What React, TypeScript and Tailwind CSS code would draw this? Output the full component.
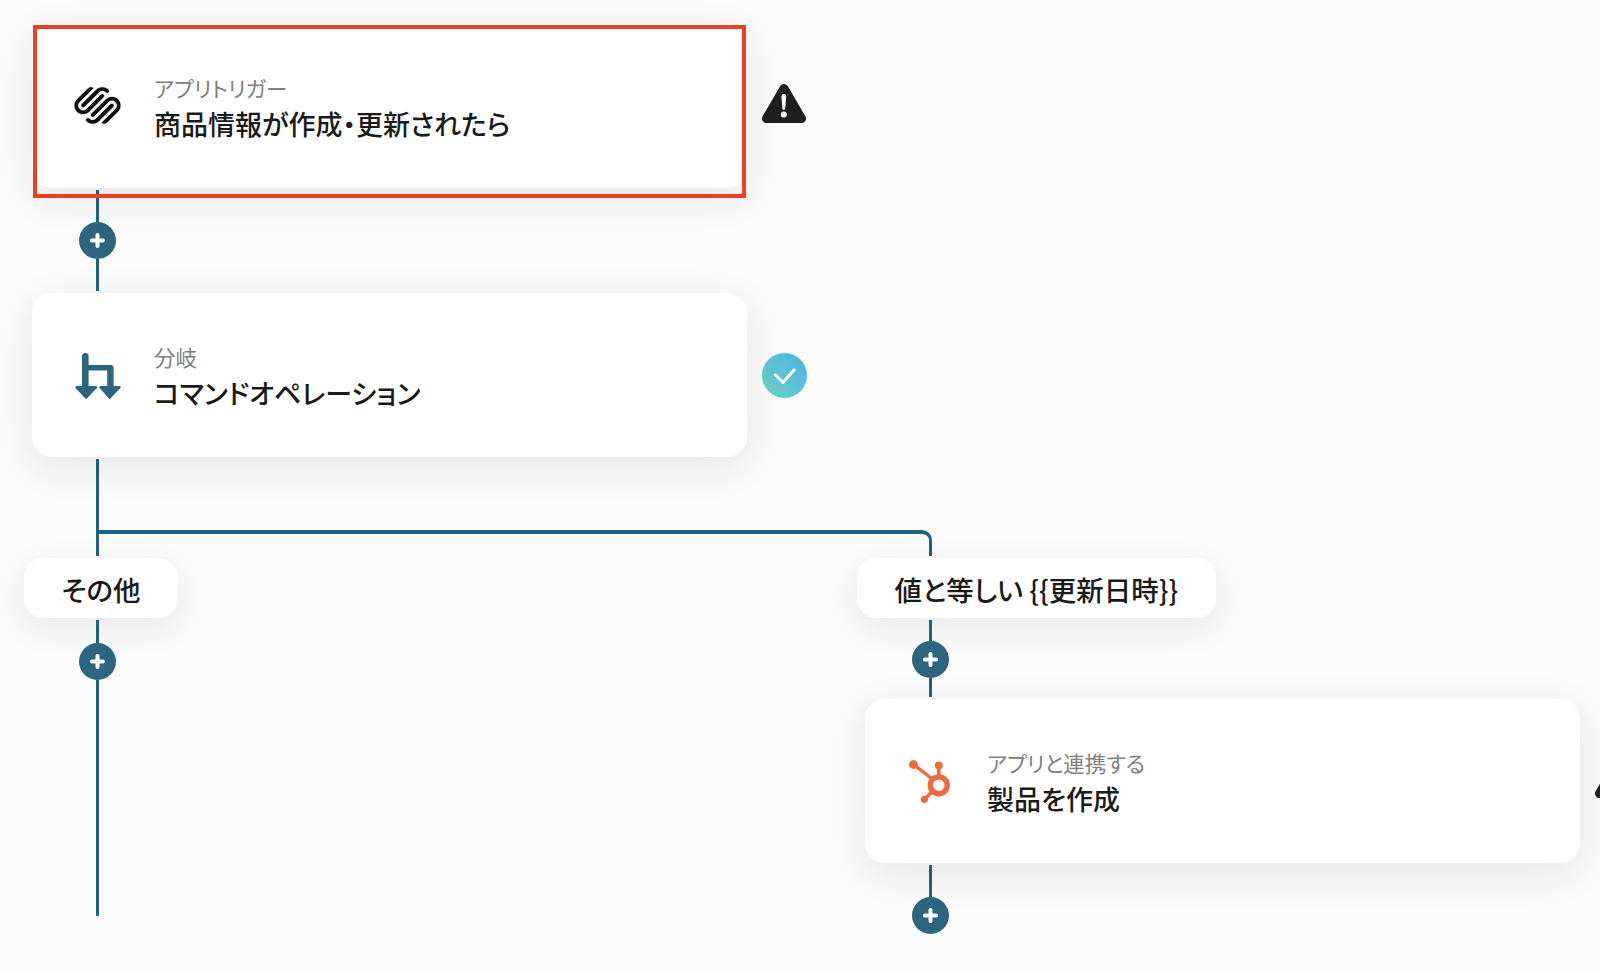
import { SiHubspot, SiSquarespace } from 'react-icons/si'

function Line({ h }: { h: string }) {
  return <div className={`w-[3px] bg-[#206380] ${h}`}></div>
}

function PlusDot() {
  return (
    <div className="w-[37px] h-[37px] rounded-full bg-[#2b6580] flex items-center justify-center">
      <svg width="15" height="15" viewBox="0 0 15 15">
        <path d="M7.5 2v11M2 7.5h11" stroke="#fff" strokeWidth="4" strokeLinecap="round" />
      </svg>
    </div>
  )
}

function WarningIcon() {
  return (
    <svg width="45" height="45" viewBox="0 0 45 45" className="shrink-0">
      <path d="M22 4.500 4.500 34.500h35z" fill="#1f1f1f" stroke="#1f1f1f" strokeWidth="9" strokeLinejoin="round" />
      <path d="M19.400 12.500a2.400 2.400 0 0 1 4.800 0l-1 12a1.400 1.400 0 0 1-2.800 0z" fill="#fff" />
      <circle cx="21.800" cy="30.500" r="3" fill="#fff" />
    </svg>
  )
}

function CheckIcon() {
  return (
    <div className="w-[45px] h-[45px] rounded-full bg-gradient-to-tr from-[#6fd3bd] to-[#4bb2ea] flex items-center justify-center shrink-0">
      <svg width="45" height="45" viewBox="0 0 45 45">
        <path d="M13.500 22l7.500 7.500L32 17" fill="none" stroke="#fff" strokeWidth="3" strokeLinecap="round" strokeLinejoin="round" />
      </svg>
    </div>
  )
}

function BranchIcon() {
  return (
    <svg width="46" height="46" viewBox="0 0 46 46" className="mt-[2px] -ml-[1px]">
      <path d="M7 3.300a3.300 3.300 0 0 1 6.600 0V12h22a3 3 0 0 1 3 3v18h-6.400V17.400H13.600V33H7z" fill="#2b6580" />
      <path d="M1.500 33h19.500a1.200 1.200 0 0 1 .9 2L11.800 45.500a1 1 0 0 1-1.500 0L.6 35a1.200 1.200 0 0 1 .9-2z" fill="#2b6580" />
      <path d="M25.500 33h19a1.200 1.200 0 0 1 .9 2l-10 10.500a1 1 0 0 1-1.500 0L24.600 35a1.200 1.200 0 0 1 .9-2z" fill="#2b6580" />
    </svg>
  )
}

function Card(props: { icon: React.ReactNode; label: string; title: string; side: React.ReactNode; marked?: boolean }) {
  return (
    <div className="flex items-center gap-[15px] w-max">
      <div className="relative w-[715px] h-[164px] shrink-0 bg-white rounded-[20px] shadow-[0_10px_40px_rgba(0,0,0,0.08)] pl-[42px] flex items-center gap-[32px]">
        <div className="w-[48px] h-[48px] flex items-center justify-center shrink-0">{props.icon}</div>
        <div className="flex flex-col pt-[5px]">
          <p className="text-[21.5px] leading-[30px] text-[#808080]">{props.label}</p>
          <p className="mt-[1px] text-[27px] leading-[40px] font-medium text-[#1a1a1a]">{props.title}</p>
        </div>
        {props.marked && (
          <div className="absolute left-[1px] right-[1px] top-[1px] -bottom-[10px] border-[4px] border-[#ee3e22]"></div>
        )}
      </div>
      {props.side}
    </div>
  )
}

function Pill({ text, width }: { text: string; width: string }) {
  return (
    <div className={`h-[60px] ${width} pt-[3px] bg-white rounded-[20px] shadow-[0_10px_34px_rgba(0,0,0,0.07)] flex items-center justify-center text-[27.5px] font-medium text-[#1a1a1a]`}>
      {text}
    </div>
  )
}

export default function App() {
  return (
    <div className="w-[1600px] h-[972px] overflow-hidden bg-[#fafafa] pl-[32px] pt-[24px] font-['Noto_Sans_CJK_JP',sans-serif] [font-feature-settings:'palt']">
      {/* trigger */}
      <Card
        marked
        icon={<SiSquarespace size={47} color="#111" stroke="#fff" strokeWidth={0.4} className="-ml-[2px] -mt-[1px]" />}
        label="アプリトリガー"
        title="商品情報が作成・更新されたら"
        side={<WarningIcon />}
      />
      <div className="ml-[47px] mt-[2px] mb-[2px] w-[37px] flex flex-col items-center">
        <Line h="h-[32px]" />
        <PlusDot />
        <Line h="h-[32px]" />
      </div>

      {/* branch */}
      <Card
        icon={<BranchIcon />}
        label="分岐"
        title="コマンドオペレーション"
        side={<CheckIcon />}
      />
      <div className="ml-[64px] mt-[2px]">
        <Line h="h-[71px]" />
      </div>
      <div className="ml-[64px] w-[836px] h-[26px] border-t-[4px] border-x-[3px] border-[#206380] rounded-tr-[10px]"></div>

      <div className="flex -ml-[8px] mt-[2px]">
        <div className="w-[833px] shrink-0">
          <Pill text="その他" width="w-[154px]" />
          <div className="ml-[55px] mt-[2px] w-[37px] flex flex-col items-center">
            <Line h="h-[23px]" />
            <PlusDot />
            <Line h="h-[236px]" />
          </div>
        </div>

        <div className="shrink-0">
          <Pill text="値と等しい {{更新日時}}" width="w-[359px]" />
          <div className="ml-[55px] mt-[2px] mb-[2px] w-[37px] flex flex-col items-center">
            <Line h="h-[21px]" />
            <PlusDot />
            <Line h="h-[19px]" />
          </div>
          <div className="ml-[8px]">
            <Card
              icon={<SiHubspot size={43} color="#f0693f" className="-ml-[3px]" />}
              label="アプリと連携する"
              title="製品を作成"
              side={<WarningIcon />}
            />
          </div>
          <div className="ml-[55px] mt-[2px] w-[37px] flex flex-col items-center">
            <Line h="h-[32px]" />
            <PlusDot />
          </div>
        </div>
      </div>
    </div>
  )
}
